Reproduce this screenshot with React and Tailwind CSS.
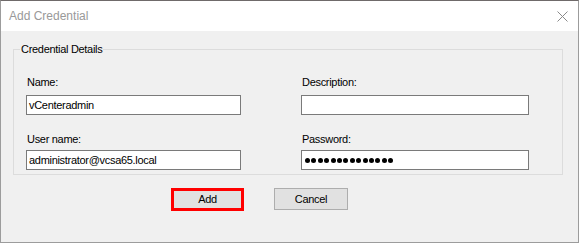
const Field = ({ label, value, width, dots = 0, className = "" }) => (
  <div className={`flex flex-col ${className}`}>
    <div className="h-[14px] leading-[14px] pl-[1px]">{label}</div>
    <div
      className={`${width} h-[20px] mt-[var(--gap)] bg-white border border-[#7a7a7a] flex items-center pl-[2px]`}
    >
      {dots > 0 ? (
        <div className="flex gap-[1.4px] pl-[1px]">
          {Array.from({ length: dots }).map((_, i) => (
            <div key={i} className="w-[5px] h-[5px] rounded-full bg-black" />
          ))}
        </div>
      ) : (
        <span>{value}</span>
      )}
    </div>
  </div>
);

export default function App() {
  return (
    <div
      className="w-[579px] h-[243px] flex flex-col bg-[#f0f0f0] border-x border-b border-[#9c9c9c] border-t border-t-[#6f6a6a] text-[11px] tracking-[-0.3px] text-black"
      style={{ fontFamily: '"Liberation Sans", Arial, sans-serif' }}
    >
      {/* title bar */}
      <div className="h-[30px] bg-white flex items-center justify-between pl-[8px] pr-[10px]">
        <span className="text-[12px] tracking-normal text-[#999999]">Add Credential</span>
        <svg width="11" height="11" viewBox="0 0 11 11" className="mt-[1px]">
          <path d="M0.5 0.5 L10.5 10.5 M10.5 0.5 L0.5 10.5" stroke="#8a8a8a" strokeWidth="1" fill="none" />
        </svg>
      </div>

      {/* body */}
      <fieldset className="ml-[12px] mt-[11px] w-[550px] border border-[#dcdcdc] pb-[4px]">
        <legend className="ml-[6px] px-[1px] leading-[14px]">Credential Details</legend>
        <div className="flex pl-[12px] pt-[19px] gap-[60px]">
          <div className="flex flex-col">
            <Field label="Name:" value="vCenteradmin" width="w-[215px]" className="[--gap:6px]" />
            <Field label="User name:" value="administrator@vcsa65.local" width="w-[215px]" className="mt-[17px] [--gap:4px]" />
          </div>
          <div className="flex flex-col">
            <Field label="Description:" value="" width="w-[228px]" className="[--gap:6px]" />
            <Field label="Password:" dots={14} width="w-[228px]" className="mt-[17px] [--gap:4px]" />
          </div>
        </div>
      </fieldset>

      <div className="flex ml-[170px] mt-[13px] gap-[30px]">
        <button className="w-[73px] h-[23px] border-[3px] border-[#ff0000] bg-[#e1e1e1] flex items-center justify-center">
          Add
        </button>
        <button className="w-[74px] h-[22px] border border-[#adadad] bg-[#e1e1e1] flex items-center justify-center">
          Cancel
        </button>
      </div>
    </div>
  );
}
